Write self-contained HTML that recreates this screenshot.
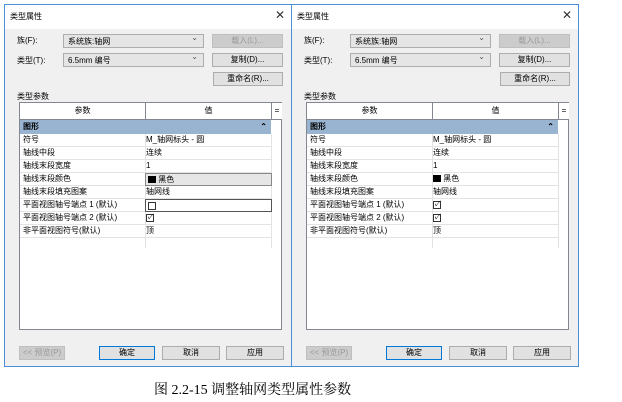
<!DOCTYPE html>
<html><head><meta charset="utf-8"><style>
*{margin:0;padding:0;box-sizing:border-box}
body{width:622px;height:402px;background:#fff;position:relative;overflow:hidden;font-family:"Liberation Sans","Noto Sans CJK SC",sans-serif;font-size:8px;color:#000}
.dlg{position:absolute;top:4px;width:288px;height:363px;background:#f0f0f0;border:1px solid #4a90d9}
.title{position:absolute;left:0;top:0;right:0;height:24px;background:#fff;font-size:8px;padding:6px 0 0 5px}
.x{position:absolute;right:6px;top:3px;font-size:12px;color:#333}
.a{position:absolute}
.combo{position:absolute;height:14px;background:#e5e5e5;border:1px solid #adadad;padding:1px 4px;font-size:8px}
.combo:after{content:"⌄";position:absolute;right:5px;top:-2px;color:#555}
.btn{position:absolute;height:14px;background:#e1e1e1;border:1px solid #adadad;text-align:center;font-size:8px;line-height:12px}
.dis{color:#999;background:#ccc;border-color:#bfbfbf}
.def{border:1px solid #0078d7}
.tbl{position:absolute;left:14px;top:97px;width:263px;height:228px;background:#fff;border:1px solid #828790}
.hd{position:absolute;top:0;height:17px;border-bottom:1px solid #828790;border-right:1px solid #828790;text-align:center;line-height:16px;background:#fff}
.grp{position:absolute;left:0;top:17px;width:251px;height:14px;background:#99b4d1;padding-left:3px;line-height:14px;font-weight:bold}
.row{position:absolute;left:0;width:251px;height:13px;border-bottom:1px solid #e3e3e3;line-height:12px}
.row span{position:absolute;left:3px}
.row b{position:absolute;left:126px;font-weight:normal}
.vline{position:absolute;top:31px;width:1px;height:114px;background:#e3e3e3}
.cb{display:inline-block;width:8px;height:8px;border:1px solid #333;vertical-align:middle;font-size:7px;line-height:6px;text-align:center}
.cap{position:absolute;left:154px;top:379px;font-size:14px;font-family:"Liberation Serif","Noto Serif CJK SC",serif}
</style></head><body>

<div class="dlg" style="left:4px">
<div class="title">类型属性<span class="x">✕</span></div>
<div class="a" style="left:12px;top:30px">族(F):</div>
<div class="combo" style="left:58px;top:29px;width:141px">系统族:轴网</div>
<div class="btn dis" style="left:207px;top:29px;width:71px">载入(L)...</div>
<div class="a" style="left:12px;top:50px">类型(T):</div>
<div class="combo" style="left:58px;top:48px;width:141px">6.5mm 编号</div>
<div class="btn" style="left:207px;top:48px;width:71px">复制(D)...</div>
<div class="btn" style="left:208px;top:67px;width:70px">重命名(R)...</div>
<div class="a" style="left:12px;top:86px">类型参数</div>
<div class="tbl">
<div class="hd" style="left:0;width:126px">参数</div>
<div class="hd" style="left:126px;width:126px">值</div>
<div class="hd" style="left:252px;width:10px;border-right:none">=</div>
<div class="grp">图形<span style="position:absolute;right:4px">⌃</span></div>
<div class="vline" style="left:125px"></div><div class="vline" style="left:251px"></div>
<div class="row" style="top:31px"><span>符号</span><b>M_轴网标头 - 圆</b></div>
<div class="row" style="top:44px"><span>轴线中段</span><b>连续</b></div>
<div class="row" style="top:57px"><span>轴线末段宽度</span><b>1</b></div>
<div class="row" style="top:70px"><span>轴线末段颜色</span><b style="left:125px;width:127px;height:13px;background:#e6e6e6;border:1px solid #888;padding-left:2px"><i style="display:inline-block;width:8px;height:7px;background:#000;vertical-align:middle"></i> 黑色</b></div>
<div class="row" style="top:83px"><span>轴线末段填充图案</span><b>轴网线</b></div>
<div class="row" style="top:96px"><span>平面视图轴号端点 1 (默认)</span><b style="left:125px;width:127px;height:13px;border:1px solid #555;padding-left:2px"><i class="cb"></i></b></div>
<div class="row" style="top:109px"><span>平面视图轴号端点 2 (默认)</span><b><i class="cb">✓</i></b></div>
<div class="row" style="top:122px"><span>非平面视图符号(默认)</span><b>顶</b></div>
</div>
<div class="btn dis" style="left:14px;top:341px;width:46px">&lt;&lt; 预览(P)</div>
<div class="btn def" style="left:94px;top:341px;width:56px">确定</div>
<div class="btn" style="left:157px;top:341px;width:58px">取消</div>
<div class="btn" style="left:221px;top:341px;width:58px">应用</div>
</div>

<div class="dlg" style="left:291px">
<div class="title">类型属性<span class="x">✕</span></div>
<div class="a" style="left:12px;top:30px">族(F):</div>
<div class="combo" style="left:58px;top:29px;width:141px">系统族:轴网</div>
<div class="btn dis" style="left:207px;top:29px;width:71px">载入(L)...</div>
<div class="a" style="left:12px;top:50px">类型(T):</div>
<div class="combo" style="left:58px;top:48px;width:141px">6.5mm 编号</div>
<div class="btn" style="left:207px;top:48px;width:71px">复制(D)...</div>
<div class="btn" style="left:208px;top:67px;width:70px">重命名(R)...</div>
<div class="a" style="left:12px;top:86px">类型参数</div>
<div class="tbl">
<div class="hd" style="left:0;width:126px">参数</div>
<div class="hd" style="left:126px;width:126px">值</div>
<div class="hd" style="left:252px;width:10px;border-right:none">=</div>
<div class="grp">图形<span style="position:absolute;right:4px">⌃</span></div>
<div class="vline" style="left:125px"></div><div class="vline" style="left:251px"></div>
<div class="row" style="top:31px"><span>符号</span><b>M_轴网标头 - 圆</b></div>
<div class="row" style="top:44px"><span>轴线中段</span><b>连续</b></div>
<div class="row" style="top:57px"><span>轴线末段宽度</span><b>1</b></div>
<div class="row" style="top:70px"><span>轴线末段颜色</span><b><i style="display:inline-block;width:8px;height:7px;background:#000;vertical-align:middle"></i> 黑色</b></div>
<div class="row" style="top:83px"><span>轴线末段填充图案</span><b>轴网线</b></div>
<div class="row" style="top:96px"><span>平面视图轴号端点 1 (默认)</span><b><i class="cb">✓</i></b></div>
<div class="row" style="top:109px"><span>平面视图轴号端点 2 (默认)</span><b><i class="cb">✓</i></b></div>
<div class="row" style="top:122px"><span>非平面视图符号(默认)</span><b>顶</b></div>
</div>
<div class="btn dis" style="left:14px;top:341px;width:46px">&lt;&lt; 预览(P)</div>
<div class="btn def" style="left:94px;top:341px;width:56px">确定</div>
<div class="btn" style="left:157px;top:341px;width:58px">取消</div>
<div class="btn" style="left:221px;top:341px;width:58px">应用</div>
</div>

<div class="cap">图 2.2-15 调整轴网类型属性参数</div>
</body></html>
